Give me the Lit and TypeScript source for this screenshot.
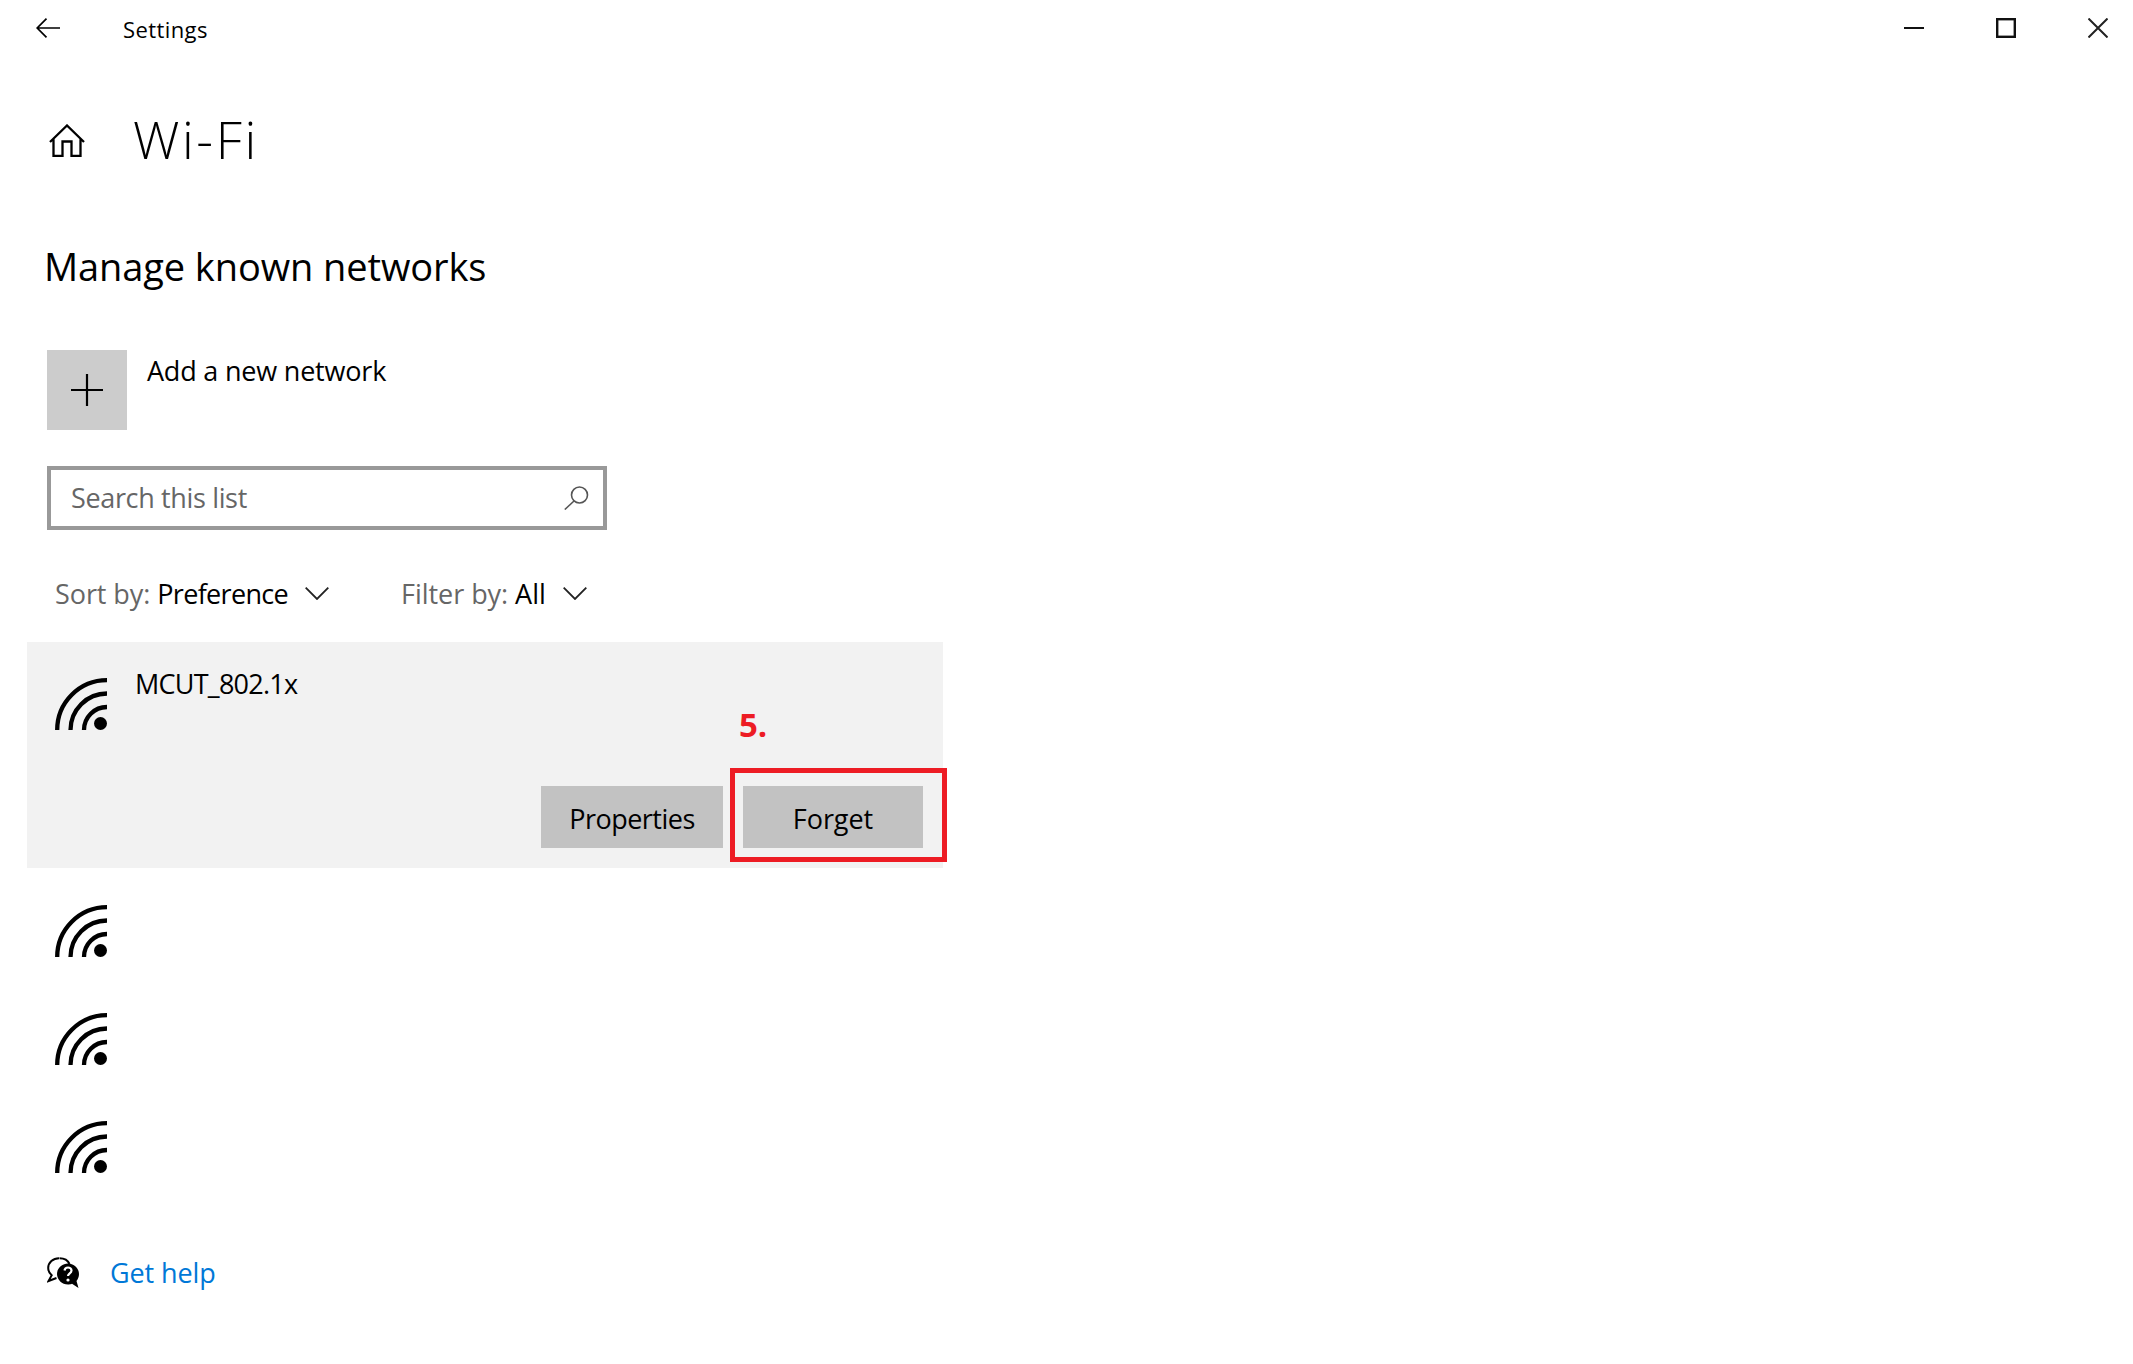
import { LitElement, html, css } from "lit";
import { customElement } from "lit/decorators.js";

const wifi = html`<svg class="wifi" viewBox="0 0 52 52" width="52" height="52" aria-hidden="true">
  <g fill="none" stroke="#000" stroke-width="4.3">
    <path d="M2.2 52A49.800 49.800 0 0 1 52 2.200"/>
    <path d="M15.500 52A36.500 36.500 0 0 1 52 15.500"/>
    <path d="M29 52A23 23 0 0 1 52 29"/>
  </g>
  <circle cx="45.5" cy="45.5" r="6.5" fill="#000"/>
</svg>`;

const chevron = html`<svg width="24" height="13" viewBox="0 0 24 13" aria-hidden="true"><path d="M.7 .7 12 12 23.300 .7" fill="none" stroke="#222" stroke-width="1.800"/></svg>`;

@customElement("app-root")
export class AppRoot extends LitElement {
  static styles = css`
    :host {
      display: block;
      width: 2133px;
      height: 1364px;
      background: #fff;
      color: #000;
      font-family: "Open Sans", "Noto Sans", sans-serif;
      overflow: hidden;
    }
    svg { display: block; flex: none; }
    .titlebar {
      display: flex;
      align-items: flex-start;
      height: 58px;
      padding: 18px 25px 0 36px;
      box-sizing: border-box;
    }
    .title-text {
      margin-left: 63px;
      margin-top: -1px;
      font-size: 22px;
      line-height: 24px;
      letter-spacing: 0.4px;
    }
    .controls {
      margin-left: auto;
      display: flex;
      gap: 72px;
    }
    .main {
      padding-left: 47px;
      display: flex;
      flex-direction: column;
      align-items: flex-start;
    }
    .head {
      display: flex;
      align-items: center;
      margin-top: 52px;
      margin-left: 2px;
      height: 60px;
    }
    .wifi-title {
      margin-left: 48px;
      margin-top: -2px;
      font-size: 52px;
      font-weight: 300;
      line-height: 60px;
      letter-spacing: 2.6px;
    }
    .section {
      margin: 71px 0 0 -3px;
      font-size: 38px;
      line-height: 50px;
      letter-spacing: -0.1px;
    }
    .add {
      display: flex;
      margin-top: 59px;
      gap: 20px;
      height: 80px;
    }
    .plus {
      width: 80px;
      height: 80px;
      background: #ccc;
      display: flex;
      align-items: center;
      justify-content: center;
    }
    .add-text {
      font-size: 27px;
      line-height: 36px;
      letter-spacing: -0.2px;
      margin-top: 3px;
    }
    .search {
      display: flex;
      align-items: center;
      justify-content: space-between;
      box-sizing: border-box;
      margin-top: 36px;
      width: 560px;
      height: 64px;
      border: 4px solid #999;
      padding: 0 14px 0 20px;
      color: #666;
      font-size: 27px;
      letter-spacing: -0.35px;
    }
    .search span { margin-top: -2px; }
    .filters {
      display: flex;
      margin: 41px 0 0 8px;
      height: 44px;
      align-items: center;
      font-size: 27px;
      color: #666;
    }
    .filters b { font-weight: 400; color: #000; }
    .filter { display: flex; align-items: center; gap: 17px; letter-spacing: -0.07px; }
    .filter b { letter-spacing: -0.67px; }
    .filter + .filter { margin-left: 72px; letter-spacing: -0.05px; }
    .filter + .filter b { letter-spacing: -0.05px; }
    .row-list { display: flex; flex-direction: column; margin-left: -20px; margin-top: 27px; }
    .row {
      position: relative;
      width: 916px;
      box-sizing: border-box;
      padding: 37px 0 0 28px;
      height: 108px;
    }
    .row.open {
      height: 226px;
      background: #f2f2f2;
      padding-top: 36px;
    }
    .row-list .row:last-child { height: 89px; }
    .row-name {
      position: absolute;
      left: 108px;
      top: 24px;
      font-size: 27px;
      line-height: 36px;
      letter-spacing: -0.75px;
    }
    .actions {
      position: absolute;
      left: 514px;
      top: 144px;
      display: flex;
      gap: 20px;
    }
    .btn {
      height: 62px;
      padding-top: 2px;
      box-sizing: border-box;
      background: #c2c2c2;
      display: flex;
      align-items: center;
      justify-content: center;
      font-size: 27px;
      color: #000;
    }
    .btn.props { width: 182px; letter-spacing: -0.5px; }
    .btn.forget { width: 180px; letter-spacing: -0.05px; }
    .mark {
      position: absolute;
      left: 703px;
      top: 126px;
      width: 217px;
      height: 94px;
      box-sizing: border-box;
      border: 5px solid #ed1c24;
    }
    .step {
      position: absolute;
      left: 712px;
      top: 63px;
      font-weight: 700;
      font-size: 33px;
      line-height: 40px;
      color: #ed1c24;
    }
    .help {
      display: flex;
      align-items: center;
      gap: 31px;
      margin-top: 82px;
    }
    .help a {
      color: #0078d7;
      font-size: 27px;
      line-height: 36px;
      letter-spacing: -0.1px;
      text-decoration: none;
    }
  `;

  render() {
    return html`
      <div class="titlebar">
        <svg width="24" height="20" viewBox="0 0 24 20" aria-hidden="true">
          <path d="M24 10H1.2M10.5 .7 1.2 10l9.3 9.3" fill="none" stroke="#000" stroke-width="1.7"/>
        </svg>
        <div class="title-text">Settings</div>
        <div class="controls">
          <svg width="20" height="20" viewBox="0 0 20 20" aria-hidden="true"><path d="M0 10H20" stroke="#111" stroke-width="2"/></svg>
          <svg width="20" height="20" viewBox="0 0 20 20" aria-hidden="true"><rect x="1.2" y="1.2" width="17.6" height="17.6" fill="none" stroke="#111" stroke-width="2.4"/></svg>
          <svg width="20" height="20" viewBox="0 0 20 20" aria-hidden="true"><path d="M.5 .5 19.5 19.5M19.5 .5 .5 19.5" stroke="#222" stroke-width="2"/></svg>
        </div>
      </div>
      <div class="main">
        <div class="head">
          <svg width="36" height="33" viewBox="0 0 36 33" aria-hidden="true">
            <path d="M1 18 18 1.5 35 18M4.5 14.5V32H13.500V17.500H22.500V32H31.500V14.500" fill="none" stroke="#000" stroke-width="2.300"/>
          </svg>
          <div class="wifi-title">Wi-Fi</div>
        </div>
        <div class="section">Manage known networks</div>
        <div class="add">
          <div class="plus">
            <svg width="32" height="32" viewBox="0 0 32 32" aria-hidden="true"><path d="M0 16H32M16 0V32" stroke="#000" stroke-width="2.200"/></svg>
          </div>
          <div class="add-text">Add a new network</div>
        </div>
        <div class="search">
          <span>Search this list</span>
          <svg width="25" height="24" viewBox="0 0 25 24" aria-hidden="true">
            <circle cx="15.500" cy="9" r="8" fill="none" stroke="#555" stroke-width="1.600"/>
            <path d="M10 15 .8 23.500" stroke="#555" stroke-width="1.600"/>
          </svg>
        </div>
        <div class="filters">
          <div class="filter">
            <span>Sort by: <b>Preference</b></span>
            ${chevron}
          </div>
          <div class="filter">
            <span>Filter by: <b>All</b></span>
            ${chevron}
          </div>
        </div>
        <div class="row-list">
          <div class="row open">
            ${wifi}
            <div class="row-name">MCUT_802.1x</div>
            <div class="step">5.</div>
            <div class="actions">
              <div class="btn props">Properties</div>
              <div class="btn forget">Forget</div>
            </div>
            <div class="mark"></div>
          </div>
          <div class="row">${wifi}</div>
          <div class="row">${wifi}</div>
          <div class="row">${wifi}</div>
        </div>
        <div class="help">
          <svg width="32" height="32" viewBox="0 0 32 32" aria-hidden="true">
            <path d="M12 1.200C6 1.200 1.200 5.500 1.200 11c0 3 1.400 5.500 3.500 7.200L1.500 24l8-3" fill="#fff" stroke="#000" stroke-width="2"/>
            <path d="M12.500 1.200C17 1.200 21 3.500 22.500 7" fill="none" stroke="#000" stroke-width="2"/>
            <path d="M21 6.500c-6 0-11 4.700-11 10.500s5 10.500 11 10.500c1.500 0 2.500-.2 4-.8l6.500 4.300-2-7c1.500-2 2.500-4.300 2.500-7C32 11.200 27 6.500 21 6.500Z" fill="#000"/>
            <path d="M17.500 13.500c.3-2 1.700-3 3.500-3s3.500 1.200 3.500 3c0 2.800-3.500 2.800-3.500 5.500" fill="none" stroke="#fff" stroke-width="2.200"/>
            <circle cx="21" cy="23" r="1.600" fill="#fff"/>
          </svg>
          <a href="#">Get help</a>
        </div>
      </div>
    `;
  }
}
